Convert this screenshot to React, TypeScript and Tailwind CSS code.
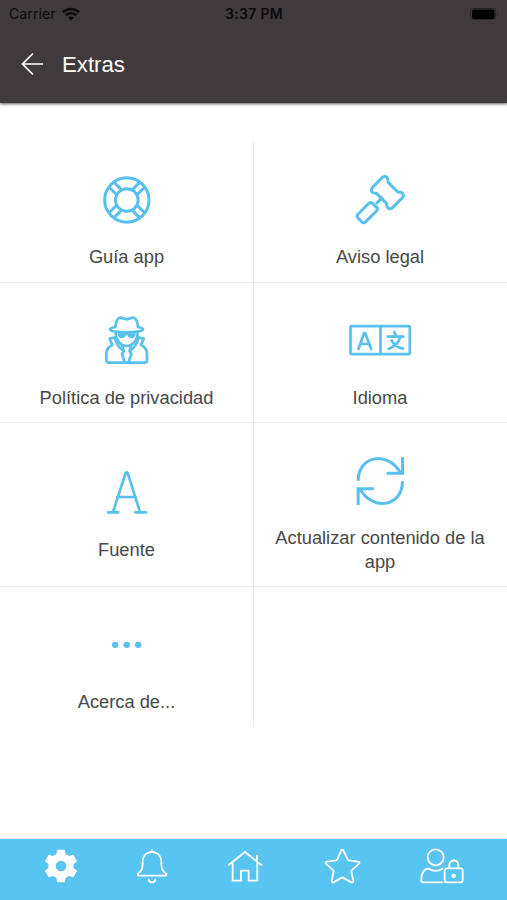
import type { ReactNode } from "react";

type IconProps = { box: string; children: ReactNode; width?: number };

function Icon({ box, children, width = 9 }: IconProps) {
  return (
    <svg
      className="size-16 shrink-0 text-[#57c0ec]"
      viewBox={box}
      fill="none"
      stroke="currentColor"
      strokeWidth={width}
      strokeLinecap="round"
      strokeLinejoin="round"
    >
      {children}
    </svg>
  );
}

function NavIcon({ box, children, width = 5.5 }: IconProps) {
  return (
    <svg
      className="size-12 shrink-0 text-white"
      viewBox={box}
      fill="none"
      stroke="currentColor"
      strokeWidth={width}
      strokeLinecap="round"
      strokeLinejoin="round"
    >
      {children}
    </svg>
  );
}

const spokes = [45, 135, 225, 315];
const teeth = [0, 60, 120, 180, 240, 300];

const LifeRing = () => (
  <Icon box="24 9 192 192">
    <circle cx="119.5" cy="105" r="66.5" />
    <circle cx="119.5" cy="105" r="34" />
    {spokes.map((a) => (
      <path key={a} d="M151 94.500h33M151 115.500h33" strokeLinecap="butt" transform={`rotate(${a} 119.5 105)`} />
    ))}
  </Icon>
);

const Gavel = () => (
  <Icon box="24.5 9 192 192">
    <path d="M127 38 98 67c-6 6-5 15 4 17l8 1 30 30 1 8c2 9 11 11 17 5l29-29c7-7 3-16-5-17l-8-1-29-29-1-8c-1-9-10-13-17-6Z" />
    <path d="M126 99 111 114" />
    <path d="m86 116-31 31c-4 4-4 8 0 12l10 11c4 4 9 4 13 0l32-32c4-4 4-7 1-10l-13-13c-4-3-8-3-12 1Z" />
  </Icon>
);

const Spy = () => (
  <Icon box="15 12 192 192" width={8}>
    <path d="M76 66c2-18 7-28 15-28 7 0 13 5 19 5s12-5 19-5c8 0 13 10 15 28 8 2 15 3 15 7 0 6-25 9-49 9s-50-3-50-9c0-4 7-5 16-7Z" />
    <path d="M77 81c0 25 15 42 33 42s33-17 33-42" />
    <path d="M82 85h56l-2 7c-5 11-20 10-24-1h-4c-4 11-19 12-24 1Z" fill="currentColor" stroke="none" />
    <path d="m74 98-15 3 8 19c-12 5-18 14-18 29v18c0 3 3 6 6 6h110c3 0 6-3 6-6v-18c0-15-6-24-18-29l8-19-15-3" />
    <path d="M75 99c3 16 12 30 26 39l-5 9 8 24M145 99c-3 16-12 30-26 39l5 9-8 24" />
    <path d="m97 121 4 17M123 121l-4 17" />
  </Icon>
);

const Language = () => (
  <Icon box="24.5 -18 192 192" width={8}>
    <rect x="32" y="33.500" width="178" height="84" rx="3" />
    <path d="M122 34v83" />
    <path d="M56 102 73 54h3l18 48M62 87h26" />
    <path d="M144 65h46M163 51l6 12M181 67c-4 15-16 27-34 34M155 76c8 15 18 21 34 25" />
  </Icon>
);

const LetterA = () => (
  <Icon box="0 3 192 192" width={8}>
    <path d="m54 156 38-117q3-4 6 0l37 117M67 111h55M39 157h31M121 157h32" />
  </Icon>
);

const Refresh = () => (
  <Icon box="9.5 12 192 192">
    <path d="M40 107c0-75 88-91 126-25M173 37v48h-48M173 109c0 75-87 91-126 25M40 180v-49h47" strokeLinecap="butt" strokeLinejoin="miter" />
  </Icon>
);

const Dots = () => (
  <Icon box="105 129 192 192">
    <g fill="currentColor" stroke="none">
      <circle cx="165.500" cy="224.500" r="9.500" />
      <circle cx="200" cy="224.500" r="9.500" />
      <circle cx="234.500" cy="224.500" r="9.500" />
    </g>
  </Icon>
);

function Tile({ icon, label, className }: { icon: ReactNode; label: string; className: string }) {
  return (
    <div className={`flex flex-col items-center border-[#e9e9e9] pl-4 ${className}`}>
      {icon}
      <span className="mt-[13px] text-center text-[18.300px] leading-6 text-[#484848]">{label}</span>
    </div>
  );
}

export default function App() {
  return (
    <div className="flex h-[900px] w-[507px] flex-col overflow-hidden bg-white font-['Liberation_Sans',Arial,sans-serif]">
      <header className="z-10 flex h-[103px] shrink-0 flex-col bg-[#403a3d] shadow-[0_1px_3px_rgba(0,0,0,0.65)]">
        <div className="grid h-[27px] grid-cols-3 items-center pr-2 pl-[9px] font-['Inter',sans-serif] text-[14px] text-[#0c0a0b]">
          <div className="flex items-center gap-[6px]">
            <span className="tracking-[0.1px]">Carrier</span>
            <svg className="h-[14px] w-[18px]" viewBox="0 0 18 14" fill="none" stroke="currentColor" strokeWidth="2.600">
              <path d="M1 5.200c4.500-4.300 11.500-4.300 16 0M3.800 8.300c3-2.800 7.400-2.800 10.400 0" />
              <path d="m9 13.500-3-3c1.700-1.500 4.300-1.500 6 0Z" fill="currentColor" stroke="none" />
            </svg>
          </div>
          <span className="text-center font-semibold tracking-[0.3px] whitespace-nowrap">3:37 PM</span>
          <svg className="h-[14px] w-[30px] justify-self-end" viewBox="0 0 30 14">
            <rect x="1.500" y="1.500" width="25" height="11" rx="3" fill="none" stroke="#292527" />
            <rect x="3" y="2.500" width="22.500" height="9.500" rx="2" fill="#000" />
            <path d="M28 5q2 2 0 4Z" fill="#292527" />
          </svg>
        </div>
        <div className="flex h-[74px] items-center pl-[21px] text-white">
          <svg className="-mt-px h-6 w-[23px]" viewBox="0 0 23 24" fill="none" stroke="currentColor" strokeWidth="1.700">
            <path d="M22 12H2M12 1.500 1.500 12 12 22.500" />
          </svg>
          <h1 className="mt-px ml-[18px] text-[22.200px] leading-7">Extras</h1>
        </div>
      </header>

      <main className="grow pt-[39px]">
        <div className="grid grid-cols-[254px_253px] grid-rows-[141px_140px_164px_140px]">
          <Tile className="border-r border-b pt-[26px] pr-4" icon={<LifeRing />} label="Guía app" />
          <Tile className="border-b pt-[26px] pr-[17px]" icon={<Gavel />} label="Aviso legal" />
          <Tile className="border-r border-b pt-[26px] pr-4" icon={<Spy />} label="Política de privacidad" />
          <Tile className="border-b pt-[26px] pr-[17px]" icon={<Language />} label="Idioma" />
          <Tile className="border-r border-b pt-[38px] pr-4" icon={<LetterA />} label="Fuente" />
          <Tile className="border-b pt-[26px] pr-[17px]" icon={<Refresh />} label="Actualizar contenido de la app" />
          <Tile className="border-r pt-[26px] pr-4" icon={<Dots />} label="Acerca de..." />
        </div>
      </main>

      <nav className="flex h-[61px] shrink-0 bg-[#57c4f1] pt-[3px] pl-[37px] shadow-[0_-1px_2px_rgba(0,0,0,0.12)]">
        <NavIcon box="111 36 144 144">
          <circle cx="183" cy="108" r="27" strokeWidth="22" />
          {teeth.map((a) => (
            <path
              key={a}
              d="M169 75l2-14q1-2 3-2h18q2 0 3 2l2 14Z"
              fill="currentColor"
              stroke="none"
              transform={`rotate(${a} 183 108)`}
            />
          ))}
        </NavIcon>
        <div className="ml-[43px]">
          <NavIcon box="384 36 144 144">
            <path d="M456 59v6M456 66c-16 0-28 12-28 28 0 24-3 28-12 35-5 5-3 8 1 8h78c5 0 7-4 1-8-9-7-12-11-12-35 0-16-12-28-28-28ZM446 149c3 11 17 11 20 0" />
          </NavIcon>
        </div>
        <div className="ml-[45px]">
          <NavIcon box="63 36 144 144">
            <path d="m86 105 49-39 49 39M98 98v54h25v-30h23v30h26V98M171 90V77" strokeLinejoin="miter" />
          </NavIcon>
        </div>
        <div className="ml-[49px]">
          <NavIcon box="354 36 144 144">
            <path d="m424 61-12 27-3 3-29 4q-6 1-2 6l22 20 1 4-6 27q0 7 6 5l24-14h4l25 14q7 1 6-5l-6-27 1-4 22-20q4-5-2-6l-29-4-3-3-13-27q-3-4-6 0Z" />
          </NavIcon>
        </div>
        <div className="ml-[51px]">
          <NavIcon box="111 36 144 144">
            <circle cx="167" cy="82" r="24" />
            <path d="M187 157h-57c-4 0-6-1-6-5 0-23 9-36 23-36 12 8 28 8 40 0" />
            <rect x="194" y="115" width="54" height="42" rx="6" />
            <path d="M208 114v-9c0-18 27-18 27 0v9" />
            <circle cx="221" cy="137" r="4" fill="currentColor" />
          </NavIcon>
        </div>
      </nav>
    </div>
  );
}
